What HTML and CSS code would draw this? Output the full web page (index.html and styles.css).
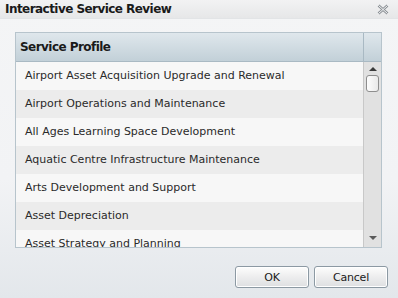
FILE: index.html
```html
<!DOCTYPE html>
<html lang="en">
<head>
    <meta charset="UTF-8">
    <title>Interactive Service Review</title>
    <link rel="stylesheet" href="styles.css">
</head>
<body>
    <div class="dialog">
        <div class="titlebar">
            <span class="title">Interactive Service Review</span>
            <span class="close">
                <svg width="12" height="11" viewBox="0 0 12 11">
                    <path d="M1.5 1.5 L10.5 9.5 M10.5 1.5 L1.5 9.5" stroke="#8a8f94" stroke-width="2.6" fill="none"/>
                    <path d="M1.5 1.5 L10.5 9.5 M10.5 1.5 L1.5 9.5" stroke="#f4f5f6" stroke-width="1" fill="none"/>
                </svg>
            </span>
        </div>
        <div class="content">
            <div class="grid">
                <div class="grid-header">
                    <div class="col-title">Service Profile</div>
                    <div class="col-spacer"></div>
                </div>
                <div class="grid-body">
                    <div class="rows">
                        <div class="row">Airport Asset Acquisition Upgrade and Renewal</div>
                        <div class="row alt">Airport Operations and Maintenance</div>
                        <div class="row">All Ages Learning Space Development</div>
                        <div class="row alt">Aquatic Centre Infrastructure Maintenance</div>
                        <div class="row">Arts Development and Support</div>
                        <div class="row alt">Asset Depreciation</div>
                        <div class="row">Asset Strategy and Planning</div>
                    </div>
                    <div class="scrollbar">
                        <div class="arrow up"></div>
                        <div class="thumb"></div>
                        <div class="track"></div>
                        <div class="arrow down"></div>
                    </div>
                </div>
            </div>
        </div>
        <div class="footer">
            <button class="btn">OK</button>
            <button class="btn">Cancel</button>
        </div>
    </div>
</body>
</html>
```

FILE: styles.css
```css
body {
    margin: 0;
    font-family: "DejaVu Sans", Verdana, sans-serif;
    font-size: 11px;
    color: #222;
}

.dialog {
    width: 398px;
    height: 298px;
    display: flex;
    flex-direction: column;
    background: linear-gradient(#f4f5f6 0%, #f2f3f5 60%, #e3e7eb 100%);
    box-sizing: border-box;
}

.titlebar {
    height: 18px;
    display: flex;
    align-items: center;
    justify-content: space-between;
    padding: 0 9px 0 5px;
    background: linear-gradient(#f2f2f3, #e6e7e8);
    border-bottom: 1px solid #e2e4e6;
}

.title {
    font-weight: bold;
    font-size: 12px;
    letter-spacing: -0.55px;
    color: #1a1a1a;
}

.close {
    display: flex;
}

.content {
    padding: 13px 16px 0 15px;
}

.grid {
    height: 214px;
    border: 1px solid #b7c4cc;
    display: flex;
    flex-direction: column;
    overflow: hidden;
}

.grid-header {
    height: 28px;
    display: flex;
    background: linear-gradient(#dfe7ec, #c2d0d8);
    border-bottom: 1px solid #a9b9c3;
    flex-shrink: 0;
}

.col-title {
    flex: 1;
    display: flex;
    align-items: center;
    padding-left: 4px;
    font-weight: bold;
    font-size: 12px;
    letter-spacing: -0.55px;
    color: #1a1a1a;
}

.col-spacer {
    width: 17px;
    border-left: 1px solid #a9b9c3;
}

.grid-body {
    flex: 1;
    display: flex;
    min-height: 0;
}

.rows {
    flex: 1;
    overflow: hidden;
    border-right: 1px solid #c8c8c8;
}

.row {
    height: 28px;
    line-height: 28px;
    padding-left: 9px;
    background: #f7f7f7;
    white-space: nowrap;
    letter-spacing: 0;
    color: #2a2a2a;
}

.row.alt {
    background: #ececec;
}

.scrollbar {
    width: 17px;
    background: #e1e1e1;
    display: flex;
    flex-direction: column;
    align-items: center;
}

.arrow {
    width: 0;
    height: 0;
    border-left: 4px solid transparent;
    border-right: 4px solid transparent;
}

.arrow.up {
    margin-top: 5px;
    border-bottom: 4px solid #3a3a3a;
}

.arrow.down {
    margin-bottom: 7px;
    border-top: 4px solid #5a5a5a;
}

.thumb {
    width: 11px;
    height: 15px;
    margin-top: 4px;
    border: 1px solid #8e8e8e;
    border-radius: 3px;
    background: linear-gradient(90deg, #fdfdfd, #e9e9e9);
}

.track {
    flex: 1;
}

.footer {
    flex: 1;
    display: flex;
    justify-content: flex-end;
    align-items: flex-start;
    gap: 5px;
    padding: 18px 10px 0 0;
}

.btn {
    width: 74px;
    height: 22px;
    font-family: "DejaVu Sans", Verdana, sans-serif;
    font-size: 11px;
    letter-spacing: -0.2px;
    color: #1a1a1a;
    border: 1px solid #8c99a3;
    border-radius: 3px;
    background: linear-gradient(#fdfdfd, #ededee 50%, #dedfe1);
    box-shadow: inset 0 0 0 1px #ffffff;
}
```
